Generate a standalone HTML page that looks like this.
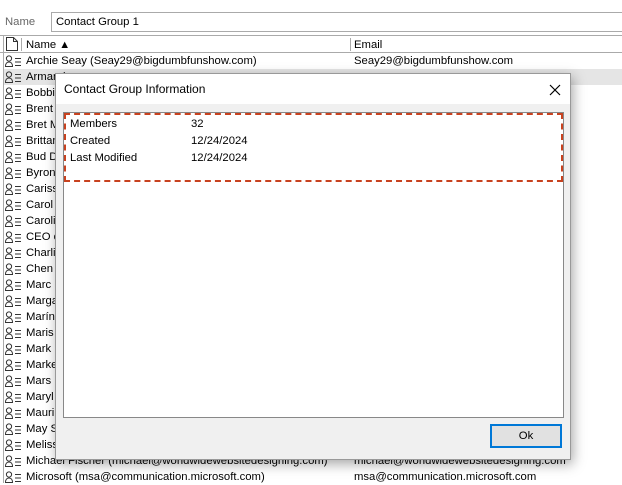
<!DOCTYPE html>
<html><head><style>
*{margin:0;padding:0;box-sizing:border-box}
body{width:622px;height:483px;overflow:hidden;background:#fff;font-family:"Liberation Sans",sans-serif;font-size:11.3px;color:#000;position:relative}
.abs{position:absolute}
.row{position:absolute;left:0;width:622px;height:16px;line-height:16px}
.row svg{position:absolute;left:5px;top:2px}
.row .n{position:absolute;left:26px}
.row .e{position:absolute;left:354px}
</style></head><body>
<svg width="0" height="0" style="position:absolute"><defs><g id="pi"><circle cx="4" cy="3.5" r="2.6" fill="none" stroke="#333"/><path d="M0.5 11.5c0-3 1.5-4.5 3.5-4.5s3.5 1.5 3.5 4.5z" fill="none" stroke="#333"/><path d="M10 3.5h6M10 7h6M10 10.5h6" stroke="#333"/></g></defs></svg>
<div class="abs" style="left:5px;top:14px;color:#666;line-height:16px">Name</div>
<div class="abs" style="left:51px;top:12px;width:580px;height:20px;border:1px solid #aaa;padding-left:4px;line-height:18px">Contact Group 1</div>
<div class="abs" style="left:0;top:35px;width:622px;height:1px;background:#aaa"></div>
<div class="abs" style="left:0;top:52px;width:622px;height:1px;background:#aaa"></div>
<div class="abs" style="left:3px;top:35px;width:1px;height:448px;background:#aaa"></div>
<svg class="abs" style="left:5px;top:37px" width="14" height="14"><path d="M1.5 0.5h7l4 4v9h-11z M8.5 0.5v4h4" fill="none" stroke="#333"/></svg>
<div class="abs" style="left:21px;top:38px;width:1px;height:13px;background:#aaa"></div>
<div class="abs" style="left:26px;top:37px;line-height:16px">Name <span style="font-size:11px">▲</span></div>
<div class="abs" style="left:350px;top:38px;width:1px;height:13px;background:#aaa"></div>
<div class="abs" style="left:354px;top:37px;line-height:16px">Email</div>
<div class="abs" style="left:4px;top:69px;width:618px;height:16px;background:#e5e5e5"></div>
<div class="row" style="top:53px"><svg width="17" height="12"><use href="#pi"/></svg><span class="n">Archie Seay (Seay29@bigdumbfunshow.com)</span><span class="e">Seay29@bigdumbfunshow.com</span></div>
<div class="row" style="top:69px"><svg width="17" height="12"><use href="#pi"/></svg><span class="n">Armand</span></div>
<div class="row" style="top:85px"><svg width="17" height="12"><use href="#pi"/></svg><span class="n">Bobbi</span></div>
<div class="row" style="top:101px"><svg width="17" height="12"><use href="#pi"/></svg><span class="n">Brent</span></div>
<div class="row" style="top:117px"><svg width="17" height="12"><use href="#pi"/></svg><span class="n">Bret M</span></div>
<div class="row" style="top:133px"><svg width="17" height="12"><use href="#pi"/></svg><span class="n">Brittan</span></div>
<div class="row" style="top:149px"><svg width="17" height="12"><use href="#pi"/></svg><span class="n">Bud D</span></div>
<div class="row" style="top:165px"><svg width="17" height="12"><use href="#pi"/></svg><span class="n">Byron</span></div>
<div class="row" style="top:181px"><svg width="17" height="12"><use href="#pi"/></svg><span class="n">Cariss</span></div>
<div class="row" style="top:197px"><svg width="17" height="12"><use href="#pi"/></svg><span class="n">Carol</span></div>
<div class="row" style="top:213px"><svg width="17" height="12"><use href="#pi"/></svg><span class="n">Caroli</span></div>
<div class="row" style="top:229px"><svg width="17" height="12"><use href="#pi"/></svg><span class="n">CEO o</span></div>
<div class="row" style="top:245px"><svg width="17" height="12"><use href="#pi"/></svg><span class="n">Charli</span></div>
<div class="row" style="top:261px"><svg width="17" height="12"><use href="#pi"/></svg><span class="n">Chen</span></div>
<div class="row" style="top:277px"><svg width="17" height="12"><use href="#pi"/></svg><span class="n">Marc</span></div>
<div class="row" style="top:293px"><svg width="17" height="12"><use href="#pi"/></svg><span class="n">Marga</span></div>
<div class="row" style="top:309px"><svg width="17" height="12"><use href="#pi"/></svg><span class="n">Marín</span></div>
<div class="row" style="top:325px"><svg width="17" height="12"><use href="#pi"/></svg><span class="n">Maris</span></div>
<div class="row" style="top:341px"><svg width="17" height="12"><use href="#pi"/></svg><span class="n">Mark</span></div>
<div class="row" style="top:357px"><svg width="17" height="12"><use href="#pi"/></svg><span class="n">Marke</span></div>
<div class="row" style="top:373px"><svg width="17" height="12"><use href="#pi"/></svg><span class="n">Mars</span></div>
<div class="row" style="top:389px"><svg width="17" height="12"><use href="#pi"/></svg><span class="n">Maryl</span></div>
<div class="row" style="top:405px"><svg width="17" height="12"><use href="#pi"/></svg><span class="n">Mauri</span></div>
<div class="row" style="top:421px"><svg width="17" height="12"><use href="#pi"/></svg><span class="n">May S</span></div>
<div class="row" style="top:437px"><svg width="17" height="12"><use href="#pi"/></svg><span class="n">Meliss</span></div>
<div class="row" style="top:453px"><svg width="17" height="12"><use href="#pi"/></svg><span class="n">Michael Fischer (michael@worldwidewebsitedesigning.com)</span><span class="e">michael@worldwidewebsitedesigning.com</span></div>
<div class="row" style="top:469px"><svg width="17" height="12"><use href="#pi"/></svg><span class="n">Microsoft (msa@communication.microsoft.com)</span><span class="e">msa@communication.microsoft.com</span></div>

<div class="abs" style="left:55px;top:73px;width:516px;height:387px;background:#f0f0f0;border:1px solid #999;box-shadow:2px 4px 12px rgba(0,0,0,.35)">
  <div class="abs" style="left:0;top:0;width:514px;height:30px;background:#fff"></div>
  <div class="abs" style="left:8px;top:8px;font-size:12px">Contact Group Information</div>
  <svg class="abs" style="left:493px;top:10px" width="12" height="12"><path d="M1 1L11 11M11 1L1 11" stroke="#000" stroke-width="1.2"/></svg>
  <div class="abs" style="left:7px;top:38px;width:501px;height:306px;background:#fff;border:1px solid #888"></div>
  <div class="abs" style="left:8px;top:39px;width:499px;height:69px;border:2px dashed #c8421f"></div>
  <div class="abs" style="left:14px;top:42px;line-height:17px">Members<br>Created<br>Last Modified</div>
  <div class="abs" style="left:135px;top:42px;line-height:17px">32<br>12/24/2024<br>12/24/2024</div>
  <div class="abs" style="left:434px;top:350px;width:72px;height:24px;background:#e1e1e1;border:2px solid #0078d7;text-align:center;line-height:20px">Ok</div>
</div>
</body></html>
